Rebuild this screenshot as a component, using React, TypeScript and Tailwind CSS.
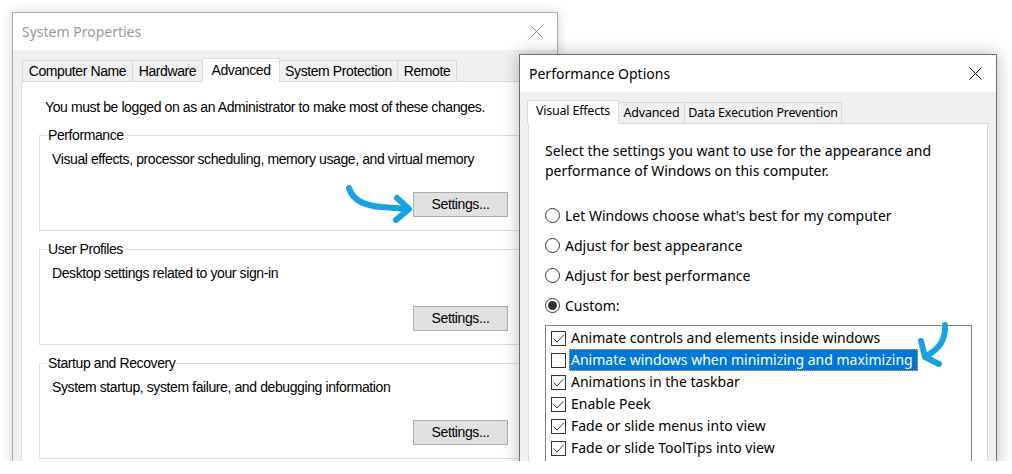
import { ReactNode } from "react";

const sans = "font-['Noto_Sans',sans-serif]";
const classic = "font-['Liberation_Sans',Arial,sans-serif]";

function CloseIcon({ color }: { color: string }) {
  return (
    <svg width="13" height="13" viewBox="0 0 13 13">
      <path d="M0.5 0.5 L12.5 12.5 M12.5 0.5 L0.5 12.5" stroke={color} strokeWidth="1" fill="none" />
    </svg>
  );
}

function TitleBar({ title, active }: { title: string; active?: boolean }) {
  return (
    <div className="flex h-[37px] shrink-0 items-center justify-between bg-white pl-[9px] pr-[14px]">
      <span className={`${sans} text-[14px] ${active ? "text-black" : "text-[#999999]"}`}>{title}</span>
      <CloseIcon color={active ? "#000000" : "#8a8a8a"} />
    </div>
  );
}

function Tab({ label, width, selected }: { label: string; width: number; selected?: boolean }) {
  return (
    <div
      style={{ width }}
      className={
        selected
          ? "relative z-10 -mb-px -ml-px flex h-[24px] shrink-0 items-start justify-center whitespace-nowrap border border-b-0 border-[#d9d9d9] bg-white pt-[1px]"
          : "-ml-px flex h-[21px] shrink-0 items-center justify-center whitespace-nowrap border border-b-0 border-[#d9d9d9] bg-[#f0f0f0] first:ml-0"
      }
    >
      {label}
    </div>
  );
}

function SettingsButton() {
  return (
    <div className="flex h-[25px] w-[95px] items-center justify-center border border-[#adadad] bg-[#e1e1e1]">
      Settings...
    </div>
  );
}

function Group({ title, text }: { title: string; text: string }) {
  return (
    <fieldset className="border border-[#dcdcdc] p-0 pb-[13px]">
      <legend className="ml-[7px] px-[1px] leading-[18px]">{title}</legend>
      <div className="pl-[12px] pt-[5px] leading-[20px]">{text}</div>
      <div className="mt-[23px] flex justify-end pr-[22px]">
        <SettingsButton />
      </div>
    </fieldset>
  );
}

function Radio({ label, checked }: { label: string; checked?: boolean }) {
  return (
    <div className="flex h-[20px] items-center gap-[5px]">
      <span className="flex h-[15px] w-[15px] items-center justify-center rounded-full border border-[#333333] bg-white">
        {checked && <span className="h-[9px] w-[9px] rounded-full bg-[#333333]" />}
      </span>
      <span>{label}</span>
    </div>
  );
}

function Check({ checked }: { checked: boolean }) {
  return (
    <span className="flex h-[15px] w-[15px] shrink-0 items-center justify-center border border-[#333333] bg-white">
      {checked && (
        <svg width="13" height="13" viewBox="0 0 13 13">
          <path d="M1.5 6.5 L5 10 L11.5 3" stroke="#333333" strokeWidth="1" fill="none" />
        </svg>
      )}
    </span>
  );
}

const effects: { label: string; checked: boolean; selected?: boolean }[] = [
  { label: "Animate controls and elements inside windows", checked: true },
  { label: "Animate windows when minimizing and maximizing", checked: false, selected: true },
  { label: "Animations in the taskbar", checked: true },
  { label: "Enable Peek", checked: true },
  { label: "Fade or slide menus into view", checked: true },
  { label: "Fade or slide ToolTips into view", checked: true },
];

function Window({ className, children }: { className: string; children: ReactNode }) {
  return <div className={`absolute flex flex-col ${className}`}>{children}</div>;
}

export default function App() {
  return (
    <div className="h-[474px] w-[1012px] bg-white">
      <div className="relative h-[461px] w-[1012px] overflow-hidden bg-white">
        {/* System Properties */}
        <Window className="left-[12px] top-[12px] h-[470px] w-[546px] border border-[#ababab] bg-[#f0f0f0] shadow-[0_0_10px_rgba(0,0,0,0.18)]">
          <TitleBar title="System Properties" />
          <div className={`${classic} flex flex-1 flex-col px-[8px] pt-[8px] text-[14px] tracking-[-0.4px] text-black`}>
            <div className="flex items-end pl-[1px]">
              <Tab label="Computer Name" width={111} />
              <Tab label="Hardware" width={71} />
              <Tab label="Advanced" width={78} selected />
              <Tab label="System Protection" width={119} />
              <Tab label="Remote" width={60} />
            </div>
            <div className="flex-1 border border-[#d9d9d9] bg-white">
              <p className="pl-[23px] pt-[15px] leading-[20px]">
                You must be logged on as an Administrator to make most of these changes.
              </p>
              <div className="flex flex-col gap-[9px] px-[17px] pt-[9px]">
                <Group title="Performance" text="Visual effects, processor scheduling, memory usage, and virtual memory" />
                <Group title="User Profiles" text="Desktop settings related to your sign-in" />
                <Group title="Startup and Recovery" text="System startup, system failure, and debugging information" />
              </div>
            </div>
          </div>
        </Window>

        {/* Performance Options */}
        <Window className="left-[519px] top-[54px] h-[430px] w-[478px] border border-[#6f6f6f] bg-[#f0f0f0] shadow-[0_0_16px_rgba(0,0,0,0.28)]">
          <TitleBar title="Performance Options" active />
          <div className={`${sans} flex flex-1 flex-col pl-[8px] pr-[8px] pt-[8px] text-[14px] text-black`}>
            <div className="flex items-end text-[12.5px] tracking-[-0.2px]">
              <Tab label="Visual Effects" width={92} selected />
              <Tab label="Advanced" width={67} />
              <Tab label="Data Execution Prevention" width={158} />
            </div>
            <div className="flex-1 border border-[#d9d9d9] bg-white pl-[16px] pr-[15px] pt-[17px]">
              <p className="leading-[20px]">
                Select the settings you want to use for the appearance and
                <br />
                performance of Windows on this computer.
              </p>
              <div className="mt-[24px] flex flex-col gap-[10px]">
                <Radio label="Let Windows choose what's best for my computer" />
                <Radio label="Adjust for best appearance" />
                <Radio label="Adjust for best performance" />
                <Radio label="Custom:" checked />
              </div>
              <div className="mt-[10px] h-[200px] w-[427px] border border-[#828282] bg-white pt-[1px]">
                {effects.map((e) => (
                  <div key={e.label} className="flex h-[22px] items-center pl-[5px]">
                    <Check checked={e.checked} />
                    <span
                      className={
                        e.selected
                          ? "ml-[3px] border border-dotted border-[#f5a623] bg-[#0078d7] px-[1px] pr-[4px] leading-[20px] text-white"
                          : "ml-[4px] px-[1px] leading-[20px]"
                      }
                    >
                      {e.label}
                    </span>
                  </div>
                ))}
              </div>
            </div>
          </div>
        </Window>

        {/* hand-drawn annotation arrows */}
        <svg className="pointer-events-none absolute left-0 top-0" width="1012" height="461">
          <g stroke="#17a2e2" strokeWidth="6" fill="none" strokeLinecap="round" strokeLinejoin="round">
            <path d="M349 188 C 353 201, 366 206, 382 207 L 407 209" />
            <path d="M397 198 L 409 209 L 396 220" />
            <path d="M945 325 C 946 340, 938 350, 926 356" />
            <path d="M921 341 L 925 357 L 939 364" />
          </g>
        </svg>
      </div>
    </div>
  );
}
